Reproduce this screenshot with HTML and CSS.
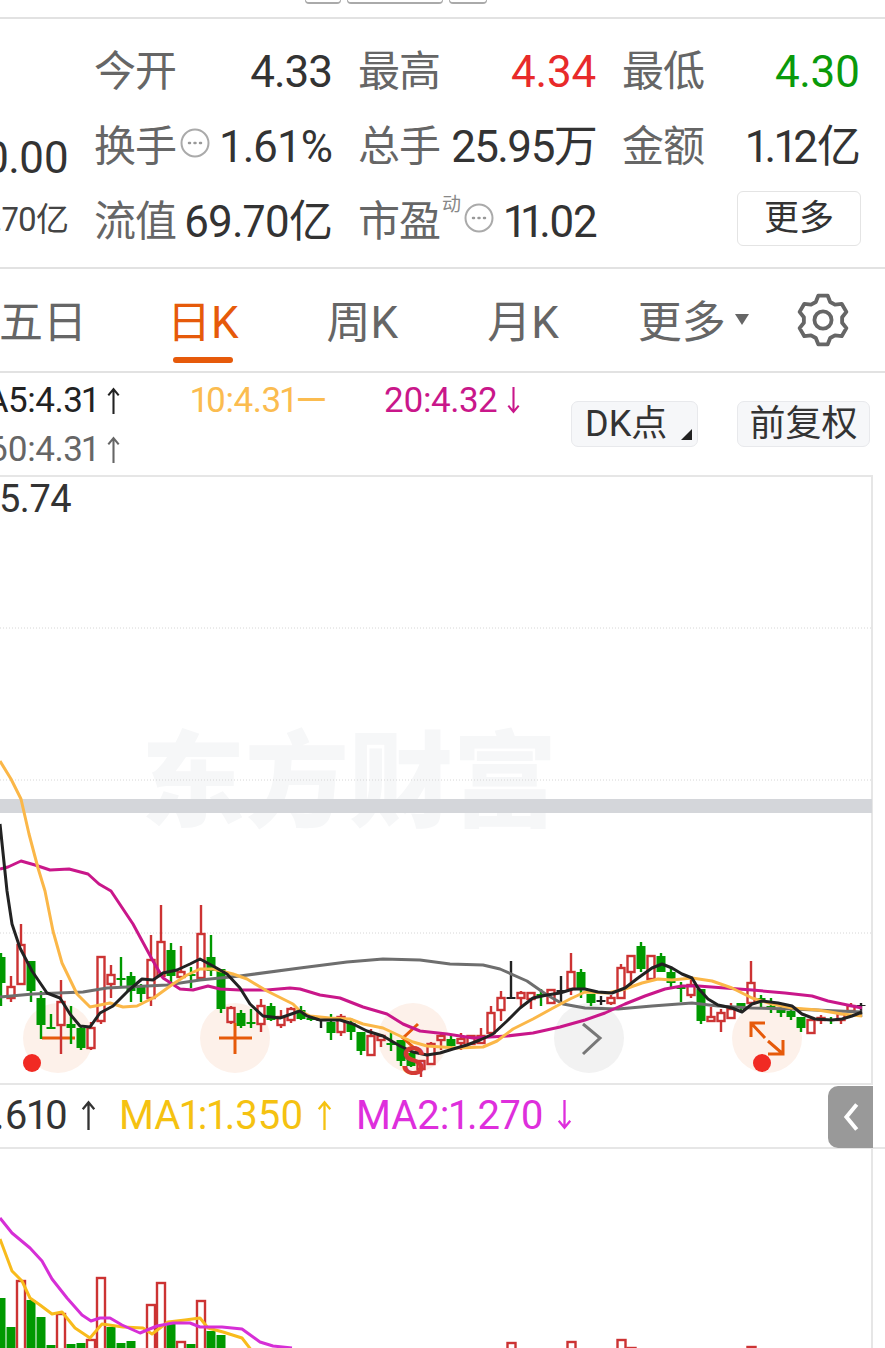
FILE: index.html
```html
<!DOCTYPE html>
<html lang="zh">
<head>
<meta charset="utf-8">
<title>K线</title>
<link rel="stylesheet" href="styles.css">
</head>
<body>
<svg class="defs" width="0" height="0">
  <symbol id="up" viewBox="0 0 14 26"><path d="M7 26V2M2 8L7 2L12 8"/></symbol>
  <symbol id="down" viewBox="0 0 14 26"><path d="M7 0V24M2 18L7 24L12 18"/></symbol>
</svg>
<div class="page">
  <header class="topbar">
    <span class="stub s1"></span><span class="stub s2"></span><span class="stub s3"></span>
  </header>

  <section class="stats">
    <div class="stats-left">
      <div class="price">0.00</div>
      <div class="cap">69.70亿</div>
    </div>
    <div class="stats-grid">
      <div class="cell"><span class="lab">今开</span><span class="val">4.33</span></div>
      <div class="cell"><span class="lab">最高</span><span class="val up">4.34</span></div>
      <div class="cell"><span class="lab">最低</span><span class="val down">4.30</span></div>
      <div class="cell"><span class="lab">换手<svg class="dots" viewBox="0 0 30 30"><circle cx="15" cy="15" r="13.5"/><path d="M9 15h1M14.500 15h1M20 15h1"/></svg></span><span class="val wide">1.61%</span></div>
      <div class="cell"><span class="lab">总手</span><span class="val tight">25.95万</span></div>
      <div class="cell"><span class="lab">金额</span><span class="val">1.12亿</span></div>
      <div class="cell"><span class="lab">流值</span><span class="val">69.70亿</span></div>
      <div class="cell"><span class="lab">市盈<sup class="dyn">动</sup><svg class="dots" viewBox="0 0 30 30"><circle cx="15" cy="15" r="13.5"/><path d="M9 15h1M14.500 15h1M20 15h1"/></svg></span><span class="val tight">11.02</span></div>
      <div class="cell end"><button class="more">更多</button></div>
    </div>
  </section>

  <nav class="tabs">
    <span class="tab t1">五日</span>
    <span class="tab t2 active">日K</span>
    <span class="tab t3">周K</span>
    <span class="tab t4">月K</span>
    <span class="tab t5">更多<i class="caret"></i></span>
    <svg class="gear" viewBox="0 0 24 24"><path d="M9.900 1.200H14.100L15.200 4L17.300 5.200L20.300 4.800L22.400 8.400L20.500 10.800V13.200L22.400 15.600L20.300 19.200L17.300 18.800L15.200 20L14.100 22.800H9.900L8.800 20L6.700 18.800L3.700 19.200L1.600 15.600L3.500 13.200V10.800L1.600 8.400L3.700 4.800L6.700 5.200L8.800 4Z"/><circle cx="12" cy="12" r="3.800"/></svg>
  </nav>

  <section class="ma">
    <div class="ma-lines">
      <div class="ma-row">
        <span class="ma5">A5:4.31<svg class="arr"><use href="#up"/></svg></span>
        <span class="ma10">10:4.31<span class="dash">—</span></span>
        <span class="ma20">20:4.32<svg class="arr"><use href="#down"/></svg></span>
      </div>
      <div class="ma-row"><span class="ma60">60:4.31<svg class="arr"><use href="#up"/></svg></span></div>
    </div>
    <button class="chip dk">DK点<i class="corner"></i></button>
    <button class="chip fq">前复权</button>
  </section>

  <section class="chart">
    <svg class="plot" viewBox="0 474 885 610" width="885" height="610">
      <text class="mark" x="141" y="818">东方财富</text>
      <path class="grid" d="M0 627H872M0 779H872M0 932H872"/>
      <rect class="band" x="0" y="798" width="872" height="14"/>
      <circle class="halo" cx="58" cy="1037" r="35"/>
      <circle class="halo" cx="235" cy="1037" r="35"/>
      <circle class="halo" cx="413" cy="1037" r="35"/>
      <circle class="halo" cx="767" cy="1037" r="35"/>
      <circle class="halo-grey" cx="589" cy="1037" r="35"/>
      <path class="ico" d="M42 1037H75"/>
      <g id="candles"></g>
      <path class="ico" d="M219 1037H252M235 1022V1053M418 1023L403 1037L420 1052"/>
      <path class="ico" d="M751 1036V1022H765M751 1022L765 1037M783 1039V1053H768M783 1053L768 1040"/>
      <path class="chev" d="M583 1023L600 1037L583 1053"/>
      <g id="lines"></g>
      <text class="sell" x="401" y="1074">S</text>
      <circle class="dot" cx="32" cy="1062" r="9"/>
      <circle class="dot" cx="762" cy="1062" r="9"/>
      <text class="top-price" x="-1" y="511">5.74</text>
    </svg>
  </section>

  <section class="vol-head">
    <span class="vh0">.610<svg class="arr"><use href="#up"/></svg></span>
    <span class="vh1">MA1:1.350<svg class="arr"><use href="#up"/></svg></span>
    <span class="vh2">MA2:1.270<svg class="arr"><use href="#down"/></svg></span>
    <div class="side"><svg viewBox="0 0 14 28"><path d="M12 3L3 14L12 25"/></svg></div>
  </section>

  <section class="vol">
    <svg class="plot" viewBox="0 1148 885 200" width="885" height="200">
      <g id="bars"></g>
      <g id="vol-lines"></g>
    </svg>
  </section>
</div>
<script src="chart.js"></script>
</body>
</html>
```

FILE: styles.css
```css
* { box-sizing: border-box; }
html, body { margin: 0; padding: 0; background: #fff; }
.defs { position: absolute; }
.page {
  width: 885px; height: 1348px; overflow: hidden;
  display: flex; flex-direction: column;
  font-family: Roboto, "Noto Sans CJK SC", sans-serif;
  font-variant-numeric: proportional-nums;
  color: #333; background: #fff;
}
.topbar {
  height: 19px; flex: none; border-bottom: 2px solid #e2e2e2;
  display: flex; gap: 6px; padding-left: 305px;
}
.stub { display: block; height: 4px; border: 1px solid #aaa; border-top: 0; border-bottom-width: 2px; border-radius: 0 0 5px 5px; }
.s1 { width: 36px; } .s2 { width: 96px; } .s3 { width: 38px; }

.stats { height: 250px; flex: none; display: flex; border-bottom: 2px solid #e2e2e2; }
.stats-left { width: 68px; flex: none; display: flex; flex-direction: column; align-items: flex-end; }
.price { font-size: 44px; line-height: 50px; margin-top: 114px; white-space: nowrap; letter-spacing: -1px; }
.cap { font-size: 33px; line-height: 40px; margin-top: 17px; white-space: nowrap; color: #444; letter-spacing: -1px; }
.stats-grid {
  margin-left: 27px; padding-top: 15px;
  display: grid; grid-template-columns: repeat(3, 237px); grid-auto-rows: 75px; column-gap: 27px;
}
.cell { display: flex; justify-content: space-between; align-items: center; white-space: nowrap; }
.cell.end { justify-content: flex-end; align-items: flex-start; padding-top: 7px; }
.lab { font-size: 42px; color: #666; display: flex; align-items: flex-start; line-height: 48px; margin-left: -1px; letter-spacing: -1px; }
.val { font-size: 44px; color: #333; line-height: 48px; letter-spacing: -1px; }
.wide { font-variant-numeric: tabular-nums; }
.tight { letter-spacing: -1.7px; }
.up { color: #e82a2a; letter-spacing: -.2px; }
.down { color: #0a9a0a; letter-spacing: -.4px; }
.dots { width: 30px; height: 30px; margin: 5px 0 0 4px; flex: none; fill: none; stroke: #aaa; stroke-width: 2; stroke-linecap: round; }
.dots path { stroke-width: 2.500; stroke: #999; }
.dyn { font-size: 19px; line-height: 20px; color: #888; margin: -3px 0 0 2px; vertical-align: baseline; }
.more {
  width: 124px; height: 55px; margin-right: -1px; background: #fff; border: 1px solid #e4e4e4; border-radius: 6px;
  font: 35px/1 Roboto, "Noto Sans CJK SC", sans-serif; color: #333; padding: 0;
}

.tabs { height: 104px; flex: none; display: flex; align-items: center; position: relative; border-bottom: 2px solid #e2e2e2; color: #666; padding-top: 5px; }
.tab { font-size: 44px; line-height: 50px; white-space: nowrap; position: relative; display: flex; align-items: center; }
.t1 { margin-left: -1px; }
.t2 { margin-left: 80px; }
.t3 { margin-left: 88px; }
.t4 { margin-left: 89px; }
.t5 { margin-left: 79px; }
.active { color: #e65a0a; }
.active::after { content: ""; position: absolute; left: 6px; bottom: -15px; width: 60px; height: 6px; border-radius: 3px; background: #e65a0a; }
.caret { width: 0; height: 0; border: 7px solid transparent; border-top: 11px solid #666; border-bottom: 0; margin: -6px 0 0 9px; }
.gear { width: 54px; height: 54px; margin-left: 47px; margin-top: -5px; fill: none; stroke: #666; stroke-width: 1.700; stroke-linejoin: round; flex: none; }

.ma { height: 102px; flex: none; display: flex; position: relative; }
.ma-lines { width: 571px; flex: none; font-size: 35px; line-height: 49px; padding-top: 3px; letter-spacing: -.5px; }
.ma-row { display: flex; white-space: nowrap; height: 49px; align-items: center; }
.arr { width: 15px; height: 27px; margin-left: 9px; fill: none; stroke: currentColor; stroke-width: 2; flex: none; }
.ma5, .ma60 { width: 121px; flex: none; display: flex; align-items: center; justify-content: flex-end; }
.ma5 { color: #222; }
.ma60 { color: #666; }
.ma10 { width: 193px; margin-left: 70px; flex: none; color: #fbbc50; display: flex; align-items: center; }
.dash { font-size: 41px; line-height: 1; }
.ma20 { color: #c9178a; display: flex; align-items: center; }
.chip {
  height: 46px; margin-top: 28px; padding: 0; background: #f6f7f9; border: 1px solid #e8e9ec; border-radius: 7px;
  font: 36px/1 Roboto, "Noto Sans CJK SC", sans-serif; color: #333; position: relative;
}
.dk { width: 127px; text-align: left; padding-left: 13px; }
.fq { width: 133px; margin-left: 39px; }
.corner { position: absolute; right: 5px; bottom: 6px; border: 0 solid transparent; border-width: 0 0 11px 11px; border-bottom-color: #222; width: 0; height: 0; }

.chart { height: 610px; flex: none; }
.plot { display: block; }
.chart .plot { background: linear-gradient(#e6e6e6, #e6e6e6) left top / 873px 2px no-repeat, linear-gradient(#e6e6e6, #e6e6e6) left 608px / 873px 2px no-repeat, linear-gradient(#e6e6e6, #e6e6e6) 871px 0 / 2px 608px no-repeat; }
.mark { font: 900 104px "Noto Sans CJK SC", sans-serif; fill: #f6f7f8; }
.grid { stroke: #d6d6d6; stroke-width: 1; stroke-dasharray: 1 2; fill: none; }
.band { fill: #d4d6da; }
.halo { fill: #fdf1ea; }
.halo-grey { fill: #f2f2f2; }
.ico { fill: none; stroke: #e65a0a; stroke-width: 3; }
.chev { fill: none; stroke: #777; stroke-width: 3; }
.dot { fill: #f12a23; }
.sell { font: 500 40px Roboto, sans-serif; fill: #d33a34; }
.top-price { font: 38px Roboto, sans-serif; fill: #333; letter-spacing: -.5px; }

.vol-head { height: 64px; flex: none; position: relative; display: flex; align-items: center; font-size: 40px; white-space: nowrap; border-bottom: 2px solid #e6e6e6; padding-bottom: 2px; }
.vol-head .arr { width: 17px; height: 30px; margin-left: 12px; }
.vh0, .vh1, .vh2 { display: flex; align-items: center; flex: none; }
.vh0 { color: #333; width: 125px; margin-left: -6px; }
.vh1 { color: #f5c211; width: 237px; }
.vh2 { color: #de2fdc; }
.side { position: absolute; right: 12px; top: 1px; width: 45px; height: 62px; background: #999; border-radius: 10px 0 0 10px; display: flex; align-items: center; justify-content: center; }
.side svg { width: 16px; height: 32px; fill: none; stroke: #fff; stroke-width: 3.500; }

.vol { height: 200px; flex: none; }
.vol .plot { background: linear-gradient(#e6e6e6, #e6e6e6) 871px 0 / 2px 100% no-repeat; }
```

FILE: chart.js
```js
var NS = "http://www.w3.org/2000/svg";
var RED = "#cc3333", GREEN = "#009900", DARK = "#222222";

function el(parent, name, attrs) {
  var node = document.createElementNS(NS, name);
  for (var k in attrs) node.setAttribute(k, attrs[k]);
  parent.appendChild(node);
  return node;
}

/* x, wick top, body top, body bottom, wick bottom, kind: r / g / d */
var candles = [
  [1,952,956,982,1005,"g"],[11,975,986,997,1001,"r"],[21,923,944,983,983,"r"],[31,960,960,990,1001,"g"],
  [41,990,997,1024,1038,"g"],[51,1013,1026,1028,1028,"g"],[61,979,1001,1024,1053,"r"],[71,1005,1023,1027,1043,"g"],
  [81,1025,1027,1047,1049,"g"],[91,1021,1027,1047,1049,"r"],[101,956,956,1020,1023,"r"],[111,964,974,983,997,"r"],
  [121,956,977,979,987,"g"],[131,971,975,990,1001,"g"],[141,983,986,993,1001,"g"],[151,934,959,997,1005,"r"],
  [161,904,941,975,975,"r"],[171,942,949,975,982,"g"],[181,945,971,976,978,"r"],[191,966,973,975,987,"g"],
  [201,904,933,977,980,"r"],[211,934,956,970,975,"g"],[221,968,968,1008,1012,"g"],[231,1005,1007,1021,1023,"r"],
  [241,1009,1012,1025,1027,"g"],[251,1008,1021,1023,1027,"g"],[261,998,1005,1023,1031,"r"],[271,1002,1005,1019,1020,"g"],
  [281,1009,1016,1024,1027,"r"],[291,1006,1008,1019,1022,"r"],[301,1005,1009,1018,1019,"g"],[311,1015,1017,1019,1020,"g"],
  [321,1018,1018,1020,1027,"d"],[331,1013,1021,1032,1039,"g"],[341,1013,1016,1031,1035,"r"],[351,1017,1022,1031,1039,"g"],
  [361,1031,1031,1050,1054,"g"],[371,1028,1035,1054,1054,"r"],[381,1033,1035,1039,1046,"r"],[391,1032,1042,1044,1050,"g"],
  [401,1039,1039,1060,1065,"g"],[411,1050,1052,1065,1066,"g"],[421,1060,1060,1068,1076,"r"],[431,1041,1043,1063,1064,"r"],
  [441,1033,1035,1039,1049,"r"],[451,1035,1038,1045,1048,"g"],[461,1032,1038,1042,1049,"r"],[471,1034,1035,1043,1043,"r"],
  [481,1027,1035,1042,1042,"r"],[491,1005,1012,1032,1032,"r"],[501,990,997,1009,1020,"r"],[511,960,996,998,998,"d"],
  [521,990,992,997,1006,"r"],[531,992,992,998,1008,"r"],[541,988,993,996,1005,"g"],[551,989,989,1002,1003,"r"],
  [561,975,989,991,1002,"d"],[571,952,971,988,994,"r"],[581,968,971,988,997,"g"],[591,993,993,1002,1005,"g"],
  [601,995,999,1001,1004,"d"],[611,994,997,1002,1004,"r"],[621,963,967,997,997,"r"],[631,955,955,971,986,"r"],
  [641,941,945,968,971,"g"],[651,955,955,978,980,"r"],[661,952,955,971,971,"g"],[671,967,971,982,987,"g"],
  [681,981,986,988,1001,"g"],[691,977,984,994,997,"r"],[701,988,988,1020,1023,"g"],[711,1006,1016,1020,1020,"r"],
  [721,1008,1012,1020,1031,"r"],[731,1002,1008,1017,1017,"r"],[741,1002,1002,1006,1011,"g"],[751,960,982,1002,1002,"r"],
  [761,994,997,999,1006,"g"],[771,997,1005,1007,1012,"g"],[781,1002,1007,1012,1016,"g"],[791,1005,1010,1016,1019,"g"],
  [801,1016,1016,1027,1031,"g"],[811,1019,1019,1032,1032,"r"],[821,1014,1017,1019,1023,"r"],[831,1016,1018,1019,1023,"g"],
  [841,1013,1013,1019,1023,"r"],[851,1002,1005,1010,1011,"r"],[861,1002,1004,1005,1016,"d"]
];

var cg = document.getElementById("candles");
candles.forEach(function (c) {
  var color = c[5] === "r" ? RED : c[5] === "g" ? GREEN : DARK;
  el(cg, "line", { x1: c[0], x2: c[0], y1: c[1], y2: c[4], stroke: color, "stroke-width": 2.4 });
  if (c[5] === "r") {
    el(cg, "rect", { x: c[0] - 3.5, y: c[2], width: 7, height: c[3] - c[2], fill: "#fff", stroke: color, "stroke-width": 2.4 });
  } else {
    el(cg, "rect", { x: c[0] - 4.5, y: c[2], width: 9, height: c[3] - c[2], fill: color });
  }
});

var lines = [
  ["#6e6e6e", "0,996 33,993 83,991 107,987 167,984 200,979 240,975 300,967 347,961 383,958 420,959 450,963 483,964 500,968 527,980 547,994 563,1003 585,1007 618,1008 652,1005 692,1002 718,1005 752,1007 792,1008 862,1011"],
  ["#c9178a", "0,868 8,866 21,860 35,864 50,869 69,868 88,873 99,883 111,890 133,923 153,960 163,977 180,988 193,989 208,985 220,988 240,989 267,989 290,987 300,988 320,994 340,997 363,1006 387,1013 403,1023 420,1030 447,1033 473,1037 507,1035 533,1032 560,1026 585,1019 605,1012 625,1003 645,995 665,988 682,985 698,985 725,987 752,989 785,992 812,995 828,1000 862,1007"],
  ["#fbb748", "0,760 11,778 21,798 29,833 38,867 45,890 53,930 62,962 77,993 90,1006 110,1002 123,1006 137,1005 155,996 173,983 187,974 200,968 213,968 233,973 247,978 267,990 283,998 293,1003 300,1010 310,1015 330,1017 350,1018 363,1023 383,1027 400,1035 413,1041 427,1045 457,1047 483,1046 497,1040 513,1028 533,1018 553,1007 570,998 585,991 608,992 625,988 642,982 658,978 672,979 692,977 712,980 732,987 752,997 772,1003 792,1007 818,1009 842,1013 862,1015"],
  ["#222222", "0,823 7,890 12,923 20,947 32,970 47,992 60,997 70,1013 80,1025 90,1026 100,1012 113,1005 128,990 142,978 153,979 163,972 177,969 190,963 200,958 213,965 227,973 240,987 250,1003 263,1015 280,1017 300,1010 307,1015 320,1019 340,1019 353,1023 367,1030 383,1035 400,1045 413,1051 427,1054 440,1052 453,1048 467,1044 480,1039 493,1033 507,1020 520,1007 533,997 547,994 560,992 573,988 585,988 598,991 612,992 625,987 638,977 652,967 662,963 672,967 682,973 692,977 698,987 708,998 718,1004 732,1007 742,1011 752,1003 762,1000 778,1002 792,1005 802,1013 815,1018 832,1019 842,1018 852,1015 862,1011"]
];
var lg = document.getElementById("lines");
lines.forEach(function (l) {
  el(lg, "polyline", { points: l[1], fill: "none", stroke: l[0], "stroke-width": 3, "stroke-linejoin": "round" });
});

/* x, top, kind */
var bars = [
  [1,1297,"g"],[11,1326,"g"],[21,1280,"r"],[31,1299,"g"],[41,1316,"g"],[51,1344,"g"],[61,1313,"r"],[71,1343,"g"],
  [81,1342,"g"],[91,1339,"r"],[101,1277,"r"],[111,1326,"g"],[121,1342,"g"],[131,1340,"g"],[151,1304,"r"],[161,1282,"r"],
  [171,1323,"g"],[181,1341,"r"],[191,1343,"g"],[201,1300,"r"],[211,1330,"g"],[221,1334,"g"],
  [511.5,1342,"r"],[571.5,1341,"r"],[621.5,1339,"r"],[631.5,1347,"r"],[751.5,1346,"r"]
];
var bg = document.getElementById("bars");
bars.forEach(function (b) {
  if (b[2] === "r") {
    el(bg, "rect", { x: b[0] - 4, y: b[1], width: 8, height: 1360 - b[1], fill: "#fff", stroke: RED, "stroke-width": 2.4 });
  } else {
    el(bg, "rect", { x: b[0] - 4.5, y: b[1], width: 9, height: 1360 - b[1], fill: GREEN });
  }
});

var volLines = [
  ["#f8bb1c", "0,1238 12,1270 22,1280 30,1297 40,1304 52,1313 62,1311 75,1327 90,1337 102,1323 123,1326 143,1327 152,1333 168,1321 185,1319 200,1317 208,1327 223,1331 242,1337 252,1350"],
  ["#d62fd6", "0,1217 12,1232 30,1247 42,1260 52,1278 67,1297 82,1314 91,1320 100,1317 110,1317 122,1324 140,1332 157,1325 173,1322 190,1322 200,1326 222,1326 242,1328 260,1341 273,1345 292,1347"]
];
var vg = document.getElementById("vol-lines");
volLines.forEach(function (l) {
  el(vg, "polyline", { points: l[1], fill: "none", stroke: l[0], "stroke-width": 3, "stroke-linejoin": "round" });
});
```
